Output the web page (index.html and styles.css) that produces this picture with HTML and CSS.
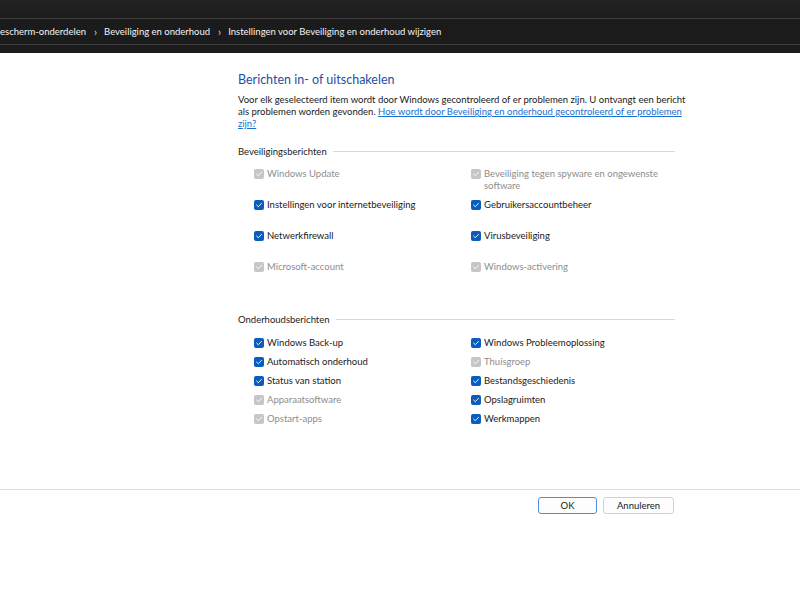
FILE: index.html
```html
<!DOCTYPE html>
<html>
<head>
<meta charset="utf-8">
<link rel="stylesheet" href="styles.css">
</head>
<body>
<div class="titlebar"></div>
<div class="crumbs">
  <span class="crumb">escherm-onderdelen</span>
  <span class="sep">›</span>
  <span class="crumb">Beveiliging en onderhoud</span>
  <span class="sep">›</span>
  <span class="crumb">Instellingen voor Beveiliging en onderhoud wijzigen</span>
</div>
<div class="gap"></div>
<div class="page">
  <div class="main">
    <h1 class="title">Berichten in- of uitschakelen</h1>
    <p class="desc">Voor elk geselecteerd item wordt door Windows gecontroleerd of er problemen zijn. U ontvangt een bericht als problemen worden gevonden. <a class="link" href="#">Hoe wordt door Beveiliging en onderhoud gecontroleerd of er problemen zijn?</a></p>

    <div class="section-head"><span>Beveiligingsberichten</span><div class="rule"></div></div>
    <div class="grid sec">
      <div class="item off"><span class="cb"></span><span class="lbl">Windows Update</span></div>
      <div class="item off"><span class="cb"></span><span class="lbl">Beveiliging tegen spyware en ongewenste software</span></div>
      <div class="item"><span class="cb"></span><span class="lbl">Instellingen voor internetbeveiliging</span></div>
      <div class="item"><span class="cb"></span><span class="lbl">Gebruikersaccountbeheer</span></div>
      <div class="item"><span class="cb"></span><span class="lbl">Netwerkfirewall</span></div>
      <div class="item"><span class="cb"></span><span class="lbl">Virusbeveiliging</span></div>
      <div class="item off"><span class="cb"></span><span class="lbl">Microsoft-account</span></div>
      <div class="item off"><span class="cb"></span><span class="lbl">Windows-activering</span></div>
    </div>

    <div class="section-head second"><span>Onderhoudsberichten</span><div class="rule"></div></div>
    <div class="grid maint">
      <div class="item"><span class="cb"></span><span class="lbl">Windows Back-up</span></div>
      <div class="item"><span class="cb"></span><span class="lbl">Windows Probleemoplossing</span></div>
      <div class="item"><span class="cb"></span><span class="lbl">Automatisch onderhoud</span></div>
      <div class="item off"><span class="cb"></span><span class="lbl">Thuisgroep</span></div>
      <div class="item"><span class="cb"></span><span class="lbl">Status van station</span></div>
      <div class="item"><span class="cb"></span><span class="lbl">Bestandsgeschiedenis</span></div>
      <div class="item off"><span class="cb"></span><span class="lbl">Apparaatsoftware</span></div>
      <div class="item"><span class="cb"></span><span class="lbl">Opslagruimten</span></div>
      <div class="item off"><span class="cb"></span><span class="lbl">Opstart-apps</span></div>
      <div class="item"><span class="cb"></span><span class="lbl">Werkmappen</span></div>
    </div>
  </div>
  <div class="footer">
    <button class="btn primary">OK</button>
    <button class="btn">Annuleren</button>
  </div>
</div>
</body>
</html>
```
FILE: styles.css
```css
html, body {
  margin: 0;
  padding: 0;
  background: #ffffff;
  font-family: "Lato", "Open Sans", sans-serif;
  font-size: 9.5px;
  color: #1a1a1a;
}
.titlebar {
  height: 18px;
  background: linear-gradient(#232221, #1d1d1d);
  border-bottom: 1px solid #3d3d3d;
}
.crumbs {
  height: 25px;
  background: #1b1b1b;
  border-bottom: 1px solid #3d3d3d;
  display: flex;
  align-items: center;
  color: #f4f4f4;
  font-size: 9.5px;
  white-space: nowrap;
}
.sep {
  margin: 0 7px 0 8px;
  font-size: 11px;
  color: #d8d8d8;
}
.gap {
  height: 8px;
  background: #1b1b1b;
}
.page {
  background: #ffffff;
}
.main {
  margin-left: 238px;
  width: 450px;
  padding-top: 19px;
}
.title {
  margin: 0;
  font-weight: normal;
  font-size: 12.5px;
  line-height: 16px;
  color: #1d4fa3;
}
.desc {
  margin: 6px 0 0 0;
  line-height: 12px;
  width: 452px;
}
.link {
  color: #1a6fd1;
  text-decoration: underline;
}
.section-head {
  display: flex;
  align-items: center;
  margin-top: 15px;
  height: 12px;
  width: 437px;
}
.section-head.second {
  margin-top: 21px;
}
.rule {
  flex: 1;
  height: 1px;
  background: #d9d9d9;
  margin-left: 6px;
}
.grid {
  display: grid;
  grid-template-columns: 217px 1fr;
  margin-left: 16px;
}
.sec {
  grid-auto-rows: 31px;
  margin-top: 11px;
}
.maint {
  grid-auto-rows: 19px;
  margin-top: 12px;
}
.item {
  display: flex;
  align-items: flex-start;
  line-height: 12px;
}
.lbl {
  max-width: 200px;
}
.cb {
  flex: none;
  width: 10px;
  height: 10px;
  margin: 1px 3px 0 0;
  border-radius: 2px;
  background: #0a5cbd url("data:image/svg+xml;utf8,<svg xmlns='http://www.w3.org/2000/svg' width='10' height='10' viewBox='0 0 10 10'><path d='M2.6 5.1 L4.3 6.7 L7.6 3.3' fill='none' stroke='white' stroke-width='0.9' stroke-linecap='round' stroke-linejoin='round'/></svg>") no-repeat center;
}
.item.off {
  color: #8d8d8d;
}
.item.off .cb {
  background-color: #c6c6c6;
}
.footer {
  margin-top: 57px;
  border-top: 1px solid #dcdcdc;
  height: 100px;
  display: flex;
  justify-content: flex-start;
  gap: 6px;
  padding-left: 538px;
  padding-top: 7px;
  box-sizing: border-box;
}
.btn {
  height: 17px;
  width: 71px;
  padding: 0;
  font-family: inherit;
  font-size: 9.5px;
  color: #1a1a1a;
  background: #fdfdfd;
  border: 1px solid #d2d2d2;
  border-radius: 3px;
}
.btn.primary {
  width: 59px;
  border-color: #4a8fdc;
}
```
